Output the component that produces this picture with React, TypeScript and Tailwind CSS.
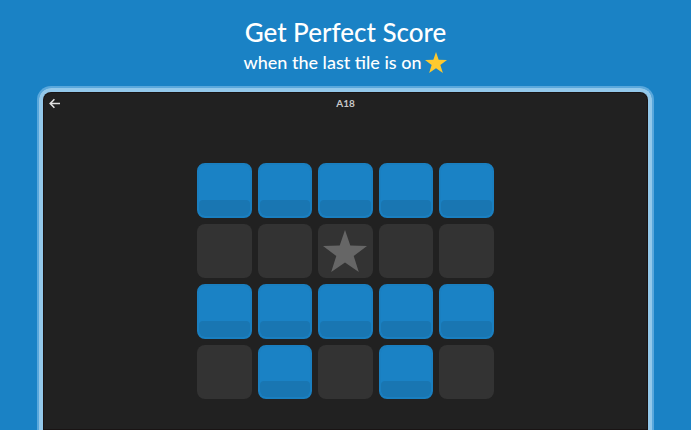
import clsx from "clsx";

const rows = [
    [true, true, true, true, true],
    [false, false, false, false, false],
    [true, true, true, true, true],
    [false, true, false, true, false],
];

const goal = { row: 1, col: 2 };

function Star({ className }: { className: string }) {
    return (
        <svg viewBox="0 0 44 42" fill="currentColor" className={className} aria-hidden="true">
            <path d="M22 0L27.3 15.6L44 16L30.7 26L35.8 42L22 32.4L8.2 42L13.3 26L0 16L16.7 15.6Z" />
        </svg>
    );
}

function Tile({ active, isGoal }: { active: boolean; isGoal: boolean }) {
    return (
        <button
            type="button"
            aria-label={isGoal ? "Goal" : active ? "Tile" : "Empty"}
            className={clsx(
                "flex aspect-square w-full overflow-hidden rounded-lg",
                active
                    ? "items-end border-2 border-[#1a7fc0] bg-[#1a82c5]"
                    : "items-center justify-center bg-[#333333]"
            )}
        >
            {active && <span className="h-4 w-full rounded-md rounded-t-sm bg-[#1976b2]" />}
            {isGoal && <Star className="w-11 text-[#666666]" />}
        </button>
    );
}

export default function App() {
    return (
        <main className="flex min-h-screen flex-col bg-[#1a82c5] px-[37px] pt-4 font-['Lato',sans-serif] text-white">
            <header className="flex flex-col items-center">
                <h1 className="text-[26px] font-medium leading-8">Get Perfect Score</h1>
                <p className="flex items-center gap-1 text-[18px] font-medium leading-7">
                    when the last tile is on
                    <Star className="w-[22px] text-[#fdc92f]" />
                </p>
            </header>

            {/* Device frame, with a darker rim round the light one */}
            <section className="mt-[10px] flex flex-1 flex-col rounded-t-[14px] border-x-2 border-t-2 border-[#5aa8dc]">
                <div className="flex flex-1 flex-col rounded-t-xl border-x-4 border-t-4 border-[#93c8ea] bg-[#212121] shadow-[inset_0_0_0_1px_#191414]">
                    {/* Title bar */}
                    <div className="grid h-[22px] grid-cols-3 items-center px-[6px]">
                        <button type="button" aria-label="Back" className="w-3">
                            <svg viewBox="0 0 12 12" fill="none" stroke="currentColor" strokeWidth={1.6} className="h-3 w-3 text-[#e0e0e0]" aria-hidden="true">
                                <path d="M11 6.5H1.5M5.4 2.3L1.2 6.5L5.4 10.7" />
                            </svg>
                        </button>
                        <h2 className="text-center text-[10px] font-bold leading-3 text-[#c8c8c8]">A18</h2>
                    </div>

                    {/* Board */}
                    <div className="mx-auto mt-[49px] grid w-full max-w-[297px] grid-cols-5 gap-[6px]">
                        {rows.map((row, r) =>
                            row.map((active, c) => (
                                <Tile key={`${r}-${c}`} active={active} isGoal={r === goal.row && c === goal.col} />
                            ))
                        )}
                    </div>
                </div>
            </section>
        </main>
    );
}
